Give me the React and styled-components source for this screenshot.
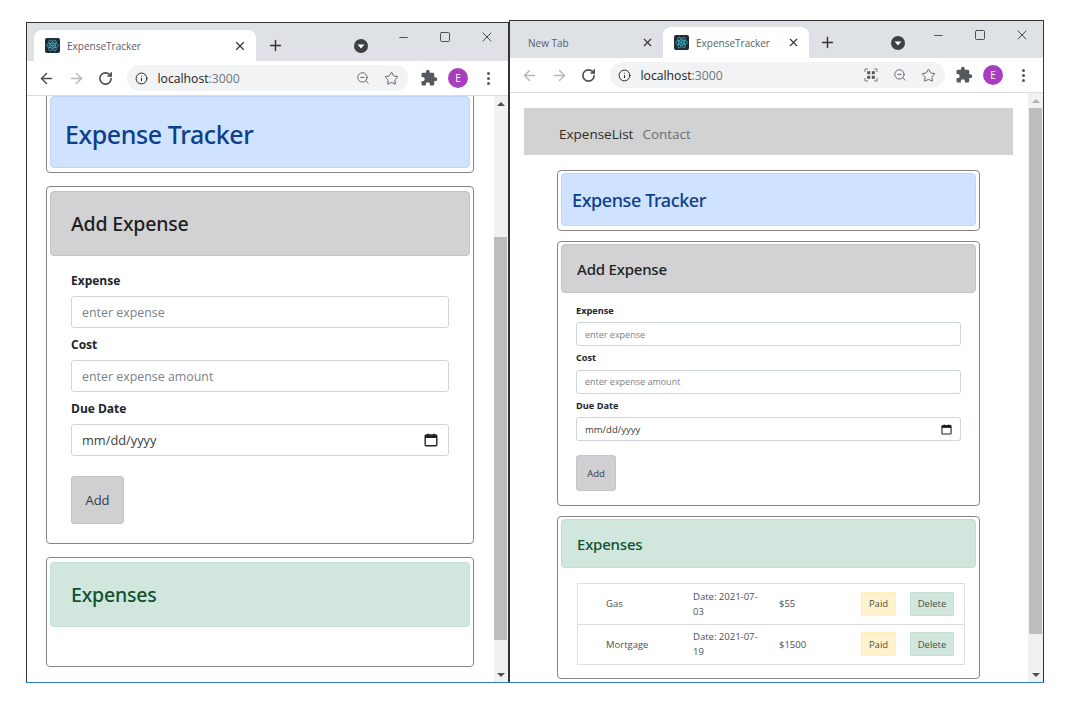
import React from 'react';
import styled, { createGlobalStyle, ThemeProvider } from 'styled-components';
import { ArrowLeft, ArrowRight, RotateCw, Info, ZoomOut, Star, X, Plus, Minus, Square } from 'lucide-react';
import { MdExtension } from 'react-icons/md';

const big = {
  titleSize: '25px',
  headSize: '19.5px',
  labelSize: '12px',
  inputSize: '12.4px',
  dateSize: '12.8px',
  btnSize: '13px',
  cardPad: '4px 3px',
  cardInset: '20px',
  headerH: '65px',
  formPadTop: '12px',
  formPadX: '21px',
  labelH: '24px',
  labelGap: '4px',
  fieldGap: '4px',
  inputH: '32px',
  inputPad: '10px',
  btnW: '53px',
  btnH: '48px',
  btnGap: '20px',
};

const small = {
  titleSize: '18px',
  headSize: '15px',
  labelSize: '9.2px',
  inputSize: '9px',
  dateSize: '9.5px',
  btnSize: '9.5px',
  cardPad: '2px 3px',
  cardInset: '15px',
  headerH: '49px',
  formPadTop: '9px',
  formPadX: '15px',
  labelH: '16px',
  labelGap: '4px',
  fieldGap: '3.5px',
  inputH: '24px',
  inputPad: '8px',
  btnW: '40px',
  btnH: '36px',
  btnGap: '14px',
};

const GlobalStyle = createGlobalStyle`
  html, body {
    margin: 0;
    padding: 0;
    background: #fff;
  }
  * {
    box-sizing: border-box;
  }
`;

const Desktop = styled.div`
  position: relative;
  width: 1075px;
  height: 701px;
  overflow: hidden;
  background: #fff;
  font-family: "Open Sans", "Noto Sans", sans-serif;
`;

const TaskbarEdge = styled.div`
  position: absolute;
  left: 26px;
  top: 682px;
  width: 1018px;
  height: 1px;
  background: #2f80c0;
`;

const Window = styled.div`
  position: absolute;
  left: ${p => p.$left}px;
  top: ${p => p.$top}px;
  width: ${p => p.$width}px;
  height: ${p => p.$height}px;
  display: flex;
  flex-direction: column;
  background: #fff;
  border: 1px solid #333;
  border-bottom: none;
  overflow: hidden;
`;

const TabStrip = styled.div`
  height: ${p => p.$height}px;
  flex-shrink: 0;
  display: flex;
  align-items: flex-end;
  padding-left: ${p => p.$pad}px;
  background: #dee1e6;
  color: #3c4043;
`;

const Tab = styled.div`
  width: ${p => p.$width}px;
  height: 31px;
  display: flex;
  align-items: center;
  gap: 7px;
  padding: 0 9px 0 11px;
  border-radius: 8px 8px 0 0;
  background: ${p => (p.$active ? '#fff' : 'transparent')};
  font-size: 10px;
  color: #5a5d61;
`;

const TabTitle = styled.span`
  flex: 1;
  white-space: nowrap;
`;

const StripButton = styled.div`
  width: ${p => p.$width}px;
  height: 31px;
  display: flex;
  align-items: center;
  justify-content: center;
  color: #303134;
`;

const StripSpacer = styled.div`
  width: ${p => p.$width}px;
  flex-shrink: 0;
`;

const WindowControls = styled.div`
  margin-left: auto;
  align-self: flex-start;
  display: flex;
  align-items: center;
  padding-top: 6px;
  color: #222;
`;

const ControlButton = styled.div`
  width: 42px;
  display: flex;
  justify-content: center;
`;

const Toolbar = styled.div`
  height: 35px;
  flex-shrink: 0;
  display: flex;
  align-items: center;
  padding: 0 10px 0 5px;
  background: #fff;
  border-bottom: 1px solid #dadce0;
`;

const NavButton = styled.div`
  width: 29.5px;
  display: flex;
  align-items: center;
  justify-content: center;
  color: ${p => (p.$off ? '#b4b7bb' : '#4a4d51')};
`;

const Omnibox = styled.div`
  width: ${p => p.$width}px;
  height: 26px;
  margin-left: 6.5px;
  display: flex;
  align-items: center;
  gap: 9.5px;
  padding: 0 2px 0 8px;
  border-radius: 13px;
  background: #f1f3f4;
  font-size: 12.2px;
  color: #202124;
`;

const Port = styled.span`
  color: #70757a;
`;

const Url = styled.span`
  flex: 1;
`;

const OmniIcons = styled.div`
  display: flex;
  align-items: center;
`;

const OmniIcon = styled.div`
  width: 29px;
  display: flex;
  justify-content: center;
  color: #5f6368;
`;

const ToolbarEnd = styled.div`
  margin-left: auto;
  display: flex;
  align-items: center;
  gap: 10px;
  color: #55585c;
`;

const Avatar = styled.div`
  width: 20px;
  height: 20px;
  border-radius: 50%;
  background: #a83dc0;
  color: #fff;
  font-size: 10px;
  display: flex;
  align-items: center;
  justify-content: center;
`;

const Dots = styled.div`
  width: 20px;
  display: flex;
  flex-direction: column;
  align-items: center;
  gap: 2px;

  i {
    width: 3px;
    height: 3px;
    border-radius: 50%;
    background: #55585c;
  }
`;

const Viewport = styled.div`
  flex: 1;
  min-height: 0;
  display: flex;
`;

const Page = styled.div`
  flex: 1;
  min-width: 0;
  overflow: hidden;
  padding: ${p => p.$padding || 0};
`;

const Scrollbar = styled.div`
  width: ${p => p.$width}px;
  flex-shrink: 0;
  display: flex;
  flex-direction: column;
  align-items: center;
  background: #f1f1f1;
`;

const ScrollArrow = styled.div`
  height: 15px;
  flex-shrink: 0;
  display: flex;
  align-items: center;
  justify-content: center;

  &::before {
    content: '';
    border-left: 4px solid transparent;
    border-right: 4px solid transparent;
    ${p => (p.$down ? 'border-top' : 'border-bottom')}: 4px solid ${p => p.$color || '#505050'};
  }
`;

const ScrollTrack = styled.div`
  flex: 1;
  width: 100%;
  display: flex;
  flex-direction: column;
  padding: ${p => p.$before}px ${p => p.$right}px ${p => p.$after}px ${p => p.$leftGap}px;
`;

const ScrollThumb = styled.div`
  flex: 1;
  background: #bdbdbd;
`;

const NavBar = styled.nav`
  height: 47px;
  margin-bottom: 15px;
  display: flex;
  align-items: center;
  gap: 9px;
  padding: 4px 0 0 35px;
  background: #d2d2d2;
  font-size: 13.5px;
`;

const NavLink = styled.span`
  color: ${p => (p.$active ? '#2b2b2b' : '#6e6e6e')};
`;

const Column = styled.div`
  display: flex;
  flex-direction: column;
  gap: ${p => p.$gap}px;
  width: ${p => p.$width}px;
  margin-left: ${p => p.$left}px;
  margin-top: ${p => p.$top || 0}px;
`;

const Card = styled.section`
  height: ${p => p.$height}px;
  flex-shrink: 0;
  padding: ${p => p.theme.cardPad};
  background: #fff;
  border: 1px solid #858585;
  border-radius: 4px;
`;

const tones = {
  blue: { bg: '#cfe2ff', border: '#bfd6f8', fg: '#0e4089' },
  grey: { bg: '#d2d2d4', border: '#c4c4c6', fg: '#1d2023' },
  green: { bg: '#d1e7dd', border: '#c2dfd2', fg: '#0f5132' },
};

const CardHeader = styled.div`
  height: ${p => p.$height || p.theme.headerH};
  display: flex;
  align-items: center;
  padding-left: ${p => p.$inset || p.theme.cardInset};
  padding-top: ${p => p.$padTop || 0};
  background: ${p => tones[p.$tone].bg};
  border: 1px solid ${p => tones[p.$tone].border};
  border-radius: 4px;
  color: ${p => tones[p.$tone].fg};
`;

const Title = styled.h1`
  margin: 0;
  font-family: "Noto Sans", "Open Sans", sans-serif;
  font-size: ${p => p.theme.titleSize};
  font-weight: 500;
  letter-spacing: -0.4px;
`;

const Heading = styled.h2`
  margin: 0;
  font-family: "Noto Sans", "Open Sans", sans-serif;
  font-size: ${p => p.theme.headSize};
  font-weight: 500;
  letter-spacing: -0.2px;
`;

const Form = styled.form`
  display: flex;
  flex-direction: column;
  padding: ${p => p.theme.formPadTop} ${p => p.theme.formPadX} 0;
`;

const Field = styled.div`
  display: flex;
  flex-direction: column;
  margin-bottom: ${p => p.theme.fieldGap};
`;

const Label = styled.label`
  height: ${p => p.theme.labelH};
  margin-bottom: ${p => p.theme.labelGap};
  display: flex;
  align-items: center;
  font-size: ${p => p.theme.labelSize};
  font-weight: 700;
  color: #212529;
`;

const InputBox = styled.div`
  height: ${p => p.theme.inputH};
  display: flex;
  align-items: center;
  justify-content: space-between;
  padding: 0 ${p => p.theme.inputPad};
  border: 1px solid #ced4da;
  border-radius: 3px;
  background: #fff;
  font-size: ${p => (p.$date ? p.theme.dateSize : p.theme.inputSize)};
  color: ${p => (p.$date ? '#3a3d40' : '#7b8288')};
`;

const AddButton = styled.button`
  width: ${p => p.theme.btnW};
  height: ${p => p.theme.btnH};
  margin-top: calc(${p => p.theme.btnGap} - ${p => p.theme.fieldGap});
  padding: 0;
  background: #d0d0d3;
  border: 1px solid #c4c4c6;
  border-radius: 3px;
  font-family: inherit;
  font-size: ${p => p.theme.btnSize};
  color: #343a40;
`;

const ExpenseList = styled.ul`
  list-style: none;
  margin: 15px 11px 0 16px;
  padding: 0;
  border: 1px solid #dfdfdf;
  border-bottom: none;
`;

const ExpenseRow = styled.li`
  height: 40.5px;
  display: grid;
  grid-template-columns: 87px 86px 82px 35px 58px;
  align-items: center;
  padding-left: 28px;
  border-bottom: 1px solid #dfdfdf;
  font-size: 9.5px;
  line-height: 15px;
  color: #4b4f53;
`;

const RowDate = styled.span`
  width: 70px;
`;

const RowButton = styled.button`
  height: 24px;
  width: ${p => p.$width}px;
  justify-self: ${p => p.$align};
  padding: 0;
  background: ${p => p.$bg};
  border: 1px solid ${p => p.$line};
  border-radius: 2px;
  font-family: inherit;
  font-size: 9.5px;
  color: #4b4f45;
`;

const ReactFavicon = () => (
  <svg width="15" height="15" viewBox="0 0 15 15">
    <rect width="15" height="15" rx="2" fill="#1d2b33" />
    <g fill="none" stroke="#45b4c8" strokeWidth="0.8">
      <ellipse cx="7.5" cy="7.5" rx="6" ry="2.4" />
      <ellipse cx="7.5" cy="7.5" rx="6" ry="2.4" transform="rotate(60 7.5 7.5)" />
      <ellipse cx="7.5" cy="7.5" rx="6" ry="2.4" transform="rotate(120 7.5 7.5)" />
    </g>
    <circle cx="7.5" cy="7.5" r="1.2" fill="#45b4c8" />
  </svg>
);

const TabSearch = () => (
  <svg width="14" height="14" viewBox="0 0 14 14">
    <circle cx="7" cy="7" r="7" fill="#3c4043" />
    <path d="M3.6 5.6h6.8L7 9.6z" fill="#fff" />
  </svg>
);

const CalendarIcon = ({ size }) => (
  <svg width={size} height={size} viewBox="0 0 14 14" fill="none">
    <rect x="1.2" y="2" width="11.6" height="10.8" rx="1" stroke="#222" strokeWidth="1.4" />
    <rect x="1.2" y="2" width="11.6" height="3" fill="#222" />
    <rect x="3.4" y="0.6" width="1.4" height="2" fill="#222" />
    <rect x="9.2" y="0.6" width="1.4" height="2" fill="#222" />
  </svg>
);

const ScanIcon = () => (
  <svg width="14" height="14" viewBox="0 0 14 14" fill="none">
    <path d="M1 4V1h3M10 1h3v3M13 10v3h-3M4 13H1v-3" stroke="#777" strokeWidth="1" />
    <rect x="3.2" y="3.2" width="3" height="3" fill="#555" />
    <rect x="7.8" y="3.2" width="3" height="3" fill="#555" />
    <rect x="3.2" y="7.8" width="3" height="3" fill="#555" />
    <rect x="7.8" y="7.8" width="3" height="3" fill="#555" />
  </svg>
);

const Controls = () => (
  <WindowControls>
    <ControlButton>
      <Minus size={13} strokeWidth={1.4} />
    </ControlButton>
    <ControlButton>
      <Square size={12} strokeWidth={1.5} />
    </ControlButton>
    <ControlButton>
      <X size={16} strokeWidth={1.2} />
    </ControlButton>
  </WindowControls>
);

const BrowserToolbar = ({ backOff, boxWidth, scan }) => (
  <Toolbar>
    <NavButton $off={backOff}>
      <ArrowLeft size={17} strokeWidth={2} />
    </NavButton>
    <NavButton $off>
      <ArrowRight size={17} strokeWidth={2} />
    </NavButton>
    <NavButton>
      <RotateCw size={15} strokeWidth={2.6} />
    </NavButton>
    <Omnibox $width={boxWidth}>
      <Info size={13} strokeWidth={1.8} />
      <Url>
        localhost<Port>:3000</Port>
      </Url>
      <OmniIcons>
        {scan && (
          <OmniIcon>
            <ScanIcon />
          </OmniIcon>
        )}
        <OmniIcon>
          <ZoomOut size={14} strokeWidth={1.6} />
        </OmniIcon>
        <OmniIcon>
          <Star size={15} strokeWidth={1.6} />
        </OmniIcon>
      </OmniIcons>
    </Omnibox>
    <ToolbarEnd>
      <MdExtension size={18} />
      <Avatar>E</Avatar>
      <Dots>
        <i />
        <i />
        <i />
      </Dots>
    </ToolbarEnd>
  </Toolbar>
);

const AddExpenseForm = ({ iconSize }) => (
  <Form>
    <Field>
      <Label>Expense</Label>
      <InputBox>enter expense</InputBox>
    </Field>
    <Field>
      <Label>Cost</Label>
      <InputBox>enter expense amount</InputBox>
    </Field>
    <Field>
      <Label>Due Date</Label>
      <InputBox $date>
        mm/dd/yyyy
        <CalendarIcon size={iconSize} />
      </InputBox>
    </Field>
    <AddButton type="button">Add</AddButton>
  </Form>
);

const expenses = [
  { name: 'Gas', date: 'Date: 2021-07-03', cost: '$55' },
  { name: 'Mortgage', date: 'Date: 2021-07-19', cost: '$1500' },
];

const App = () => (
  <Desktop>
    <GlobalStyle />

    <ThemeProvider theme={big}>
      <Window $left={26} $top={22} $width={483} $height={660}>
        <TabStrip $height={38} $pad={7}>
          <Tab $width={222} $active>
            <ReactFavicon />
            <TabTitle>ExpenseTracker</TabTitle>
            <X size={14} strokeWidth={2} color="#333" />
          </Tab>
          <StripButton $width={38}>
            <Plus size={17} strokeWidth={2} />
          </StripButton>
          <StripSpacer $width={52} />
          <StripButton $width={30}>
            <TabSearch />
          </StripButton>
          <Controls />
        </TabStrip>
        <BrowserToolbar boxWidth={281} />
        <Viewport>
          <Page>
            <Column $gap={13} $width={428} $left={19} $top={-5}>
              <Card $height={82}>
                <CardHeader $tone="blue" $height="72px" $inset="14px" $padTop="3px">
                  <Title>Expense Tracker</Title>
                </CardHeader>
              </Card>
              <Card $height={358}>
                <CardHeader $tone="grey">
                  <Heading>Add Expense</Heading>
                </CardHeader>
                <AddExpenseForm iconSize={14} />
              </Card>
              <Card $height={110}>
                <CardHeader $tone="green">
                  <Heading>Expenses</Heading>
                </CardHeader>
              </Card>
            </Column>
          </Page>
          <Scrollbar $width={14}>
            <ScrollArrow />
            <ScrollTrack $before={126} $after={27} $right={1} $leftGap={0}>
              <ScrollThumb />
            </ScrollTrack>
            <ScrollArrow $down />
          </Scrollbar>
        </Viewport>
      </Window>
    </ThemeProvider>

    <ThemeProvider theme={small}>
      <Window $left={509} $top={20} $width={535} $height={662}>
        <TabStrip $height={37} $pad={7}>
          <Tab $width={146}>
            <TabTitle>New Tab</TabTitle>
            <X size={13} strokeWidth={2} color="#333" />
          </Tab>
          <Tab $width={146} $active>
            <ReactFavicon />
            <TabTitle>ExpenseTracker</TabTitle>
            <X size={13} strokeWidth={2} color="#333" />
          </Tab>
          <StripButton $width={36}>
            <Plus size={17} strokeWidth={2} />
          </StripButton>
          <StripSpacer $width={38} />
          <StripButton $width={30}>
            <TabSearch />
          </StripButton>
          <Controls />
        </TabStrip>
        <BrowserToolbar backOff boxWidth={335} scan />
        <Viewport>
          <Page $padding="15px 15px 0 14px">
            <NavBar>
              <NavLink $active>ExpenseList</NavLink>
              <NavLink>Contact</NavLink>
            </NavBar>
            <Column $gap={10} $width={423} $left={33}>
              <Card $height={61}>
                <CardHeader $tone="blue" $height="53px" $inset="10px">
                  <Title>Expense Tracker</Title>
                </CardHeader>
              </Card>
              <Card $height={265}>
                <CardHeader $tone="grey">
                  <Heading>Add Expense</Heading>
                </CardHeader>
                <AddExpenseForm iconSize={11} />
              </Card>
              <Card $height={163}>
                <CardHeader $tone="green">
                  <Heading>Expenses</Heading>
                </CardHeader>
                <ExpenseList>
                  {expenses.map(item => (
                    <ExpenseRow key={item.name}>
                      <span>{item.name}</span>
                      <RowDate>{item.date}</RowDate>
                      <span>{item.cost}</span>
                      <RowButton $width={35} $align="start" $bg="#fff3cd" $line="#ffeeba">
                        Paid
                      </RowButton>
                      <RowButton $width={44} $align="end" $bg="#d1e7dd" $line="#c2dfd2">
                        Delete
                      </RowButton>
                    </ExpenseRow>
                  ))}
                </ExpenseList>
              </Card>
            </Column>
          </Page>
          <Scrollbar $width={15}>
            <ScrollArrow $color="#b0b0b0" />
            <ScrollTrack $before={0} $after={33} $right={1} $leftGap={1}>
              <ScrollThumb />
            </ScrollTrack>
            <ScrollArrow $down />
          </Scrollbar>
        </Viewport>
      </Window>
    </ThemeProvider>

    <TaskbarEdge />
  </Desktop>
);

export default App;
